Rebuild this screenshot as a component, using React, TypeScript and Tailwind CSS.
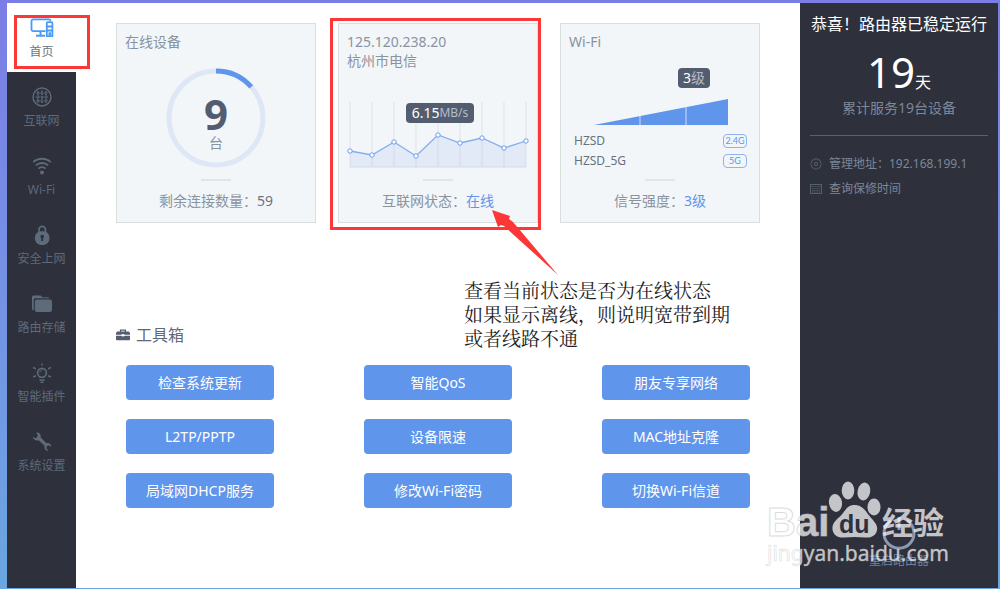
import React, { useState } from 'react';

type IconProps = { className?: string };

const HomeIcon: React.FC<IconProps> = ({ className }) => (
    <svg viewBox="0 0 24 20" className={className} fill="none" stroke="currentColor" strokeWidth="1.8">
        <path d="M15.5 13.2H3.2a1.7 1.7 0 0 1-1.7-1.7V3a1.7 1.7 0 0 1 1.7-1.7h15.6c.9 0 1.7.7 1.7 1.4" />
        <path d="M10.500 13.200v4M6 17.800h9" strokeWidth="2" />
        <path d="M16.800 5.200a1 1 0 0 1 1-1h3.600a1 1 0 0 1 1 1v13h-5.600zM17 8.500h5.500M17 12.500h5.500" />
        <path d="M18.500 15.800h2.500" strokeWidth="3" />
    </svg>
);

const GlobeIcon: React.FC<IconProps> = ({ className }) => (
    <svg viewBox="0 0 20 20" className={className} fill="none" stroke="currentColor">
        <circle cx="10" cy="10" r="9" strokeWidth="1.4" />
        <path d="M6 4.200v11.600M10 3.500v13M14 4.200v11.600" strokeWidth="1.500" strokeDasharray="2 0.600" />
        <path d="M4.200 6h11.600M3.500 10h13M4.200 14h11.600" strokeWidth="1.200" strokeDasharray="2 0.600" />
    </svg>
);

const WifiIcon: React.FC<IconProps> = ({ className }) => (
    <svg viewBox="0 0 20 20" className={className} fill="none" stroke="currentColor" strokeWidth="1.8">
        <path d="M1.200 6.200a13 13 0 0 1 17.600 0" />
        <path d="M3.800 9.400a9.200 9.200 0 0 1 12.400 0" />
        <path d="M6.400 12.600a5.400 5.400 0 0 1 7.200 0" />
        <circle cx="10" cy="16.500" r="2" fill="currentColor" stroke="none" />
    </svg>
);

const LockIcon: React.FC<IconProps> = ({ className }) => (
    <svg viewBox="0 0 20 20" className={className} fill="currentColor">
        <path d="M7 9V4.500a3.200 3.200 0 0 1 6.400 0V9" fill="none" stroke="currentColor" strokeWidth="1.700" />
        <path
            fillRule="evenodd"
            d="M10.200 6.200c4.600 0 7.300 2.600 7.300 6.700s-2.700 7.100-7.300 7.100-7.300-3-7.300-7.100 2.700-6.700 7.300-6.700zm0 3.600a1.800 1.800 0 0 0-1 3.300v2.900h2v-2.900a1.800 1.800 0 0 0-1-3.300z"
        />
    </svg>
);

const FolderIcon: React.FC<IconProps> = ({ className }) => (
    <svg viewBox="0 0 20 20" className={className} fill="currentColor">
        <path d="M0 15V3.200C0 2.200.7 1.500 1.700 1.500h7l1.600 1.700h6.500v1H4C2.500 4.200 1.700 5 1.700 6.500v9.800C.7 16.300 0 15.800 0 15z" />
        <rect x="2.800" y="5.400" width="17.200" height="12.600" rx="2.200" />
    </svg>
);

const BulbIcon: React.FC<IconProps> = ({ className }) => (
    <svg viewBox="0 0 20 20" className={className} fill="none" stroke="currentColor" strokeWidth="1.5">
        <circle cx="10" cy="9.800" r="4.400" strokeWidth="1.600" />
        <path d="M10.200 7.300a2.500 2.500 0 0 0-2.500 2.400" strokeWidth=".8" />
        <path d="M8 15v-1.500M12 15v-1.500M7.500 17h5M8.500 19.200h3" />
        <path d="M10 .5v2M1.200 4.500l2.600 1.200M18.800 4.500l-2.600 1.200M1.200 14l2.600-1.200M18.800 14l-2.600-1.200" />
    </svg>
);

const WrenchIcon: React.FC<IconProps> = ({ className }) => (
    <svg viewBox="0 0 20 20" className={className} fill="currentColor">
        <path d="M4.200.7C7 0 9.300 2.400 8.600 5.200l5.700 6c2.600-.6 5 1 5.200 3.700l-2.600-1.700-2.200 1-.1 2.300 2 2.300c-3 .2-4.700-2.200-4-4.800L6.700 8.200C4 9 1.200 7.500.7 4.500l2.500 1.700L5.400 5l.2-2.300z" />
    </svg>
);

const ToolboxIcon: React.FC<IconProps> = ({ className }) => (
    <svg viewBox="0 0 14 12" className={className} fill="currentColor">
        <path d="M4.500 3V1.200h5V3" fill="none" stroke="currentColor" strokeWidth="1.200" />
        <path d="M1.200 2.500h11.600L14 4v1.800H8.600a1.700 1.200 0 0 0-3.200 0H0V4z" />
        <path d="M0 6.800h5.300a1.800 1.200 0 0 0 3.400 0H14v3.500a.9.9 0 0 1-.9.9H.9a.9.9 0 0 1-.9-.9z" />
    </svg>
);

const GearIcon: React.FC<IconProps> = ({ className }) => (
    <svg viewBox="0 0 12 12" className={className} fill="none" stroke="currentColor">
        <path d="M4.800.8h2.400l.6 1 1.500-.1 1 1.300v1.300l.9 1v1.500l-.9 1-.1 1.500-1.400 1-1.300-.1-.8 1H5l-.8-1-1.500-.1-1-1.200V7.700l-.9-1V5.300l.9-1 .1-1.500 1.300-1 1.300.1z" />
        <circle cx="6" cy="6" r="1.700" />
    </svg>
);

const CalendarIcon: React.FC<IconProps> = ({ className }) => (
    <svg viewBox="0 0 12 12" className={className} fill="none" stroke="currentColor">
        <rect x=".5" y="1.500" width="11" height="9" />
        <path d="M.5 3.500h11M2 5.500h8M2 7.500h8M2 9h8" strokeDasharray="1.500 .7" strokeWidth=".8" />
    </svg>
);

const navItems = [
    { id: 'home', label: '首页', icon: HomeIcon },
    { id: 'internet', label: '互联网', icon: GlobeIcon },
    { id: 'wifi', label: 'Wi-Fi', icon: WifiIcon },
    { id: 'security', label: '安全上网', icon: LockIcon },
    { id: 'storage', label: '路由存储', icon: FolderIcon },
    { id: 'plugins', label: '智能插件', icon: BulbIcon },
    { id: 'settings', label: '系统设置', icon: WrenchIcon },
];

const tools = [
    '检查系统更新',
    '智能QoS',
    '朋友专享网络',
    'L2TP/PPTP',
    '设备限速',
    'MAC地址克隆',
    '局域网DHCP服务',
    '修改Wi-Fi密码',
    '切换Wi-Fi信道',
];

const speeds = [50, 54, 41, 55, 34, 42, 37, 47, 40];

const Card: React.FC<{ footer: React.ReactNode; children: React.ReactNode; marked?: boolean }> = ({
    footer,
    children,
    marked,
}) => (
    <section className="relative flex h-[200px] w-[200px] flex-col border border-[#d9dede] bg-[#f2f6f9] text-sm text-[#8a93a0]">
        <div className="flex flex-1 flex-col px-2 pt-2">{children}</div>
        <div className="mx-auto h-[2px] w-[30px] bg-[#e1e5e8]" />
        <p className="mt-2 mb-[9px] text-center leading-6">{footer}</p>
        {marked && (
            <div className="pointer-events-none absolute -top-[6px] -right-1 -bottom-2 -left-[9px] border-3 border-[#fc3737]" />
        )}
    </section>
);

const DevicesCard: React.FC = () => {
    const length = 2 * Math.PI * 47;
    return (
        <Card footer={<>剩余连接数量：<span className="text-[#6b7482]">59</span></>}>
            <h2 className="leading-5">在线设备</h2>
            <div className="mx-auto mt-4 grid place-items-center">
                <svg viewBox="0 0 100 100" className="col-start-1 row-start-1 h-[100px] w-[100px]" fill="none" strokeWidth="5">
                    <circle cx="50" cy="50" r="47" stroke="#dee7f6" />
                    <circle
                        cx="50"
                        cy="50"
                        r="47"
                        stroke="#6095ec"
                        strokeDasharray={`${length * 0.135} ${length}`}
                        transform="rotate(-90 50 50)"
                    />
                </svg>
                <div className="col-start-1 row-start-1 flex flex-col items-center pt-3">
                    <span className="text-[42px] leading-[38px] font-bold text-[#535d70]">9</span>
                    <span className="leading-5">台</span>
                </div>
            </div>
        </Card>
    );
};

const InternetCard: React.FC = () => {
    const points = speeds.map((y, i) => ({ x: 3 + i * 22, y }));
    const line = points.map(p => `${p.x},${p.y}`).join(' ');
    return (
        <Card marked footer={<>互联网状态：<a href="#status" className="text-[#6095ec]">在线</a></>}>
            <h2 className="leading-5">125.120.238.20</h2>
            <p className="leading-[18px]">杭州市电信</p>
            <div className="relative mt-[31px]">
                <svg viewBox="0 0 182 68" className="h-[68px] w-[182px]">
                    {points.map(p => (
                        <path key={p.x} d={`M${p.x} 1V66`} stroke="#dfe3e7" />
                    ))}
                    <polygon points={`3,66 ${line} 179,66`} fill="#6080ec" fillOpacity=".1" />
                    <path d="M3 66H179" stroke="#d3dbe6" />
                    <polyline points={line} fill="none" stroke="#85aeee" strokeWidth="1.3" />
                    {points.map(p => (
                        <circle key={p.x} cx={p.x} cy={p.y} r="2.200" fill="#fff" stroke="#6c9dec" />
                    ))}
                </svg>
                <div className="absolute top-[2px] left-[59px] flex h-5 w-[68px] items-center justify-center rounded bg-[#535d70] text-white">
                    <span>6.15</span>
                    <span className="text-xs text-[#b3bcca]">MB/s</span>
                </div>
            </div>
        </Card>
    );
};

const WifiCard: React.FC = () => (
    <Card footer={<>信号强度：<a href="#signal" className="text-[#6095ec]">3级</a></>}>
        <h2 className="leading-5">Wi-Fi</h2>
        <div className="mt-4 mr-[41px] flex h-5 w-8 items-center justify-center self-end rounded bg-[#535d70]">
            <span className="text-white">3</span>
            <span className="text-[#b3bcca]">级</span>
        </div>
        <svg viewBox="0 0 134 26" className="mt-[11px] mr-[23px] h-[26px] w-[134px] self-end">
            <path d="M0 26L134 0V26z" fill="#6095ec" />
            <path d="M46 17V26M92 8V26" stroke="#cfdff8" />
        </svg>
        <ul className="mt-[6px] pr-1 pl-[5px] text-xs leading-5 text-[#68717e]">
            {[
                { name: 'HZSD', band: '2.4G' },
                { name: 'HZSD_5G', band: '5G' },
            ].map(({ name, band }) => (
                <li key={name} className="flex items-center justify-between">
                    {name}
                    <span className="h-[14px] w-6 rounded border border-[#8db3f1] text-center font-['Lato'] text-[9px] leading-3 text-[#6095ec]">
                        {band}
                    </span>
                </li>
            ))}
        </ul>
    </Card>
);

const Watermark: React.FC = () => (
    <svg
        viewBox="0 0 190 100"
        className="pointer-events-none absolute right-[48px] bottom-[11px] h-[100px] w-[190px]"
        fill="#fff"
        fillOpacity=".72"
    >
        <g stroke="#c4c4c4" strokeOpacity=".6">
            <text x="7" y="59" className="font-['Liberation_Sans'] text-[40px] font-bold">Bai</text>
            <text x="7" y="84" className="font-['Noto_Sans'] text-[21px]" strokeWidth=".6">jingyan.baidu.com</text>
        </g>
        <text x="122" y="57" className="font-['Noto_Sans_CJK_SC'] text-[31px] font-bold">经验</text>
        <ellipse cx="75.500" cy="26" rx="6.500" ry="9" transform="rotate(-8 75 26)" />
        <ellipse cx="88" cy="13.500" rx="6.300" ry="9" />
        <ellipse cx="104" cy="14.500" rx="6.300" ry="9" transform="rotate(12 104 14)" />
        <ellipse cx="114" cy="30" rx="6.500" ry="8.500" />
        <path d="M94.500 28c8 0 11 6 15 11 5 6 8.500 9 7.500 14-1 6-6 8-12 7.500-7-.7-14-.7-21 0-6 .5-10.500-2-11.500-8-.8-6 4-10 8.500-14 4.500-5 6-10.500 13.500-10.500z" />
        <text x="79" y="56" fill="#2e303c" fillOpacity="1" className="font-['Liberation_Sans'] text-[25px] font-bold">du</text>
    </svg>
);

const App: React.FC = () => {
    const [active, setActive] = useState('home');

    return (
        <div className="relative flex min-h-screen bg-linear-to-b from-[#7b7de6] to-[#6aa6e1] pt-[3px] pr-[2px] pb-px pl-[7px] font-['Noto_Sans','Noto_Sans_CJK_SC',sans-serif]">
            <nav className="w-[69px] shrink-0 bg-[#2e303c]">
                {navItems.map(({ id, label, icon: Icon }) => (
                    <button
                        key={id}
                        onClick={() => setActive(id)}
                        className={`flex h-[69px] w-full cursor-pointer flex-col items-center gap-1 pt-[15px] text-xs leading-5 ${
                            active === id ? 'bg-white text-[#6b7482]' : 'text-[#5d6b7b]'
                        }`}
                    >
                        <Icon className={active === id ? 'h-5 w-6 text-[#4a9af5]' : 'h-5 w-5'} />
                        {label}
                    </button>
                ))}
            </nav>

            <main className="min-w-0 flex-1 bg-white px-10 pt-5">
                <div className="flex justify-between">
                    <DevicesCard />
                    <InternetCard />
                    <WifiCard />
                </div>

                <h2 className="mt-[100px] flex items-center gap-[6px] leading-6 text-[#5f6979]">
                    <ToolboxIcon className="h-3 w-[14px] text-[#535d70]" />
                    工具箱
                </h2>
                <div className="mt-[18px] grid grid-cols-[repeat(3,148px)] justify-between gap-y-[19px] px-[10px]">
                    {tools.map(tool => (
                        <button key={tool} className="h-[35px] cursor-pointer rounded bg-[#6095ec] text-sm text-white">
                            {tool}
                        </button>
                    ))}
                </div>
            </main>

            <aside className="relative flex w-[198px] shrink-0 flex-col bg-[#2e303c] px-[10px] pt-[9px] text-[#7d8798]">
                <h2 className="text-center leading-6 whitespace-nowrap text-white">恭喜！路由器已稳定运行</h2>
                <p className="mt-4 flex items-baseline justify-center text-white">
                    <span className="text-[42px] leading-10">19</span>
                    <span className="leading-5">天</span>
                </p>
                <p className="mt-1 text-center text-sm leading-6">累计服务19台设备</p>
                <hr className="mt-[15px] border-[#5a606c]" />
                <ul className="mt-[15px] text-xs leading-[25px]">
                    <li className="flex items-center gap-[7px]">
                        <GearIcon className="h-3 w-3 text-[#565f6e]" />
                        管理地址：192.168.199.1
                    </li>
                    <li className="flex items-center gap-[7px]">
                        <CalendarIcon className="h-3 w-3 text-[#565f6e]" />
                        <a href="#warranty">查询保修时间</a>
                    </li>
                </ul>
                <button className="mx-auto mt-auto mb-[17px] flex cursor-pointer flex-col items-center text-xs leading-5 text-[#6f83a5]">
                    <svg viewBox="0 0 36 36" className="h-9 w-9" fill="none" stroke="#8b9ab2" strokeWidth="3">
                        <path d="M10 5.500a15 15 0 1 0 16 0M18 2v13" />
                    </svg>
                    重启路由器
                </button>
                <Watermark />
            </aside>

            {/* callouts drawn over the page */}
            <div className="pointer-events-none absolute top-[15px] left-[14px] h-[54px] w-[76px] border-3 border-[#fc3737]" />
            <svg viewBox="0 0 66 65" className="pointer-events-none absolute top-[210px] left-[492px] h-[65px] w-[66px]">
                <path d="M0 0L18 6 17 9 21 12 66 65 12 16 9 15 6 17z" fill="#fc3737" />
            </svg>
            <p className="pointer-events-none absolute top-[280px] left-[464px] font-['Liberation_Serif','Noto_Serif_CJK_SC','Noto_Sans_CJK_SC',serif] text-[19px] leading-6 text-[#222]">
                查看当前状态是否为在线状态
                <br />
                如果显示离线，则说明宽带到期
                <br />
                或者线路不通
            </p>
        </div>
    );
};

export default App;
